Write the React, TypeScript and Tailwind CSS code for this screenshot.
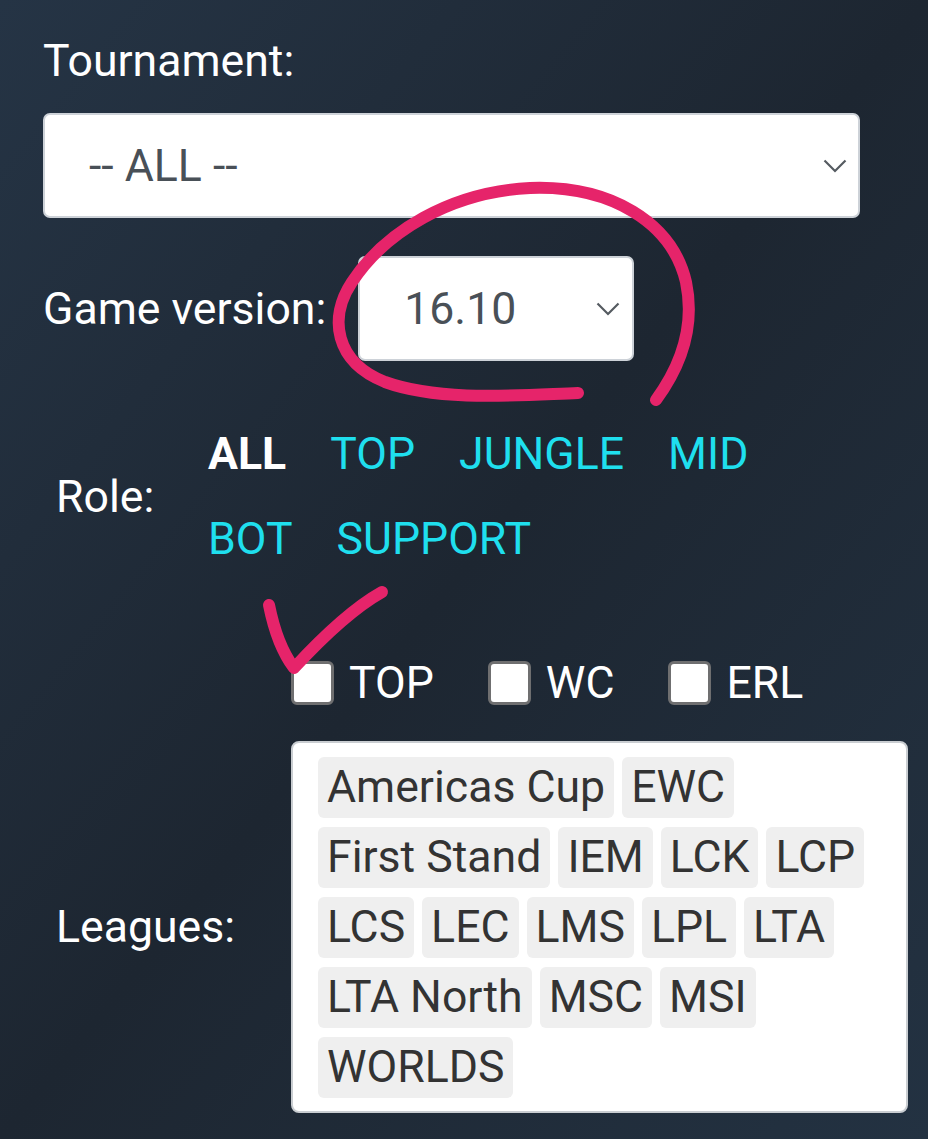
import { ReactNode } from "react";

const roles = ["ALL", "TOP", "JUNGLE", "MID", "BOT", "SUPPORT"];
const leagues = [
  "Americas Cup",
  "EWC",
  "First Stand",
  "IEM",
  "LCK",
  "LCP",
  "LCS",
  "LEC",
  "LMS",
  "LPL",
  "LTA",
  "LTA North",
  "MSC",
  "MSI",
  "WORLDS",
];

function Chevron() {
  return (
    <svg width="24" height="14" viewBox="0 0 24 14" fill="none" className="shrink-0">
      <path d="M1.5 1.5 L12 12 L22.5 1.5" stroke="#555b61" strokeWidth="2.2" />
    </svg>
  );
}

function FakeSelect({ value, className }: { value: string; className?: string }) {
  return (
    <div
      className={`flex h-[105px] shrink-0 items-center justify-between rounded-[7px] border-2 border-[#cdd2d8] bg-white pl-[44px] pr-[11px] text-[#495057] ${className ?? ""}`}
    >
      <span>{value}</span>
      <Chevron />
    </div>
  );
}

function Check({ label }: { label: string }) {
  return (
    <label className="flex items-center gap-[15px]">
      <span className="block h-[44px] w-[43px] rounded-[6px] border-[3px] border-[#6f6f70] bg-white" />
      <span>{label}</span>
    </label>
  );
}

function Cell({ children, className }: { children: ReactNode; className?: string }) {
  return <div className={`flex shrink-0 items-center ${className ?? ""}`}>{children}</div>;
}

export default function App() {
  return (
    <div className="relative min-h-[1139px] w-full overflow-hidden bg-linear-to-br from-[#253445] via-[#1d2631] to-[#233242] font-['Roboto',sans-serif] text-[44.6px] leading-[66px] text-white">
      <div className="pl-[43px] pt-[28px]">
        <div className="h-[66px]">Tournament:</div>
        <FakeSelect value="-- ALL --" className="mt-[19px] w-[817px]" />

        <div className="mt-[38px] flex items-center gap-[32px]">
          <span>Game version:</span>
          <FakeSelect value="16.10" className="w-[276px] pl-[44px] pr-[12px]" />
        </div>

        {/* role filter */}
        <div className="mt-[51px] flex items-center">
          <Cell className="w-[165px] pl-[13px]">Role:</Cell>
          <div className="flex w-[570px] flex-wrap gap-x-[44px] leading-[85px]">
            {roles.map((r) =>
              r === "ALL" ? (
                <span key={r} className="font-bold text-white">
                  {r}
                </span>
              ) : (
                <a key={r} href="#" className="text-[#1fdfee]">
                  {r}
                </a>
              )
            )}
          </div>
        </div>

        <div className="mt-[66px] flex h-[70px] items-center pl-[248px]">
          <div className="flex items-center gap-[54px]">
            <Check label="TOP" />
            <Check label="WC" />
            <Check label="ERL" />
          </div>
        </div>

        <div className="mt-[23px] flex items-center">
          <Cell className="w-[248px] pl-[13px]">Leagues:</Cell>
          <div className="flex h-[372px] w-[617px] shrink-0 flex-wrap content-start gap-x-[8px] gap-y-[9px] rounded-[8px] border-2 border-[#c9cdd1] bg-white pb-[14px] pl-[25px] pr-[28px] pt-[14px]">
            {leagues.map((l) => (
              <span
                key={l}
                className="flex h-[61px] items-center rounded-[6px] bg-[#efefef] px-[9px] text-[44.6px] leading-none text-[#333333]"
              >
                {l}
              </span>
            ))}
          </div>
        </div>
      </div>

      {/* hand-drawn annotations */}
      <svg
        className="pointer-events-none absolute inset-0"
        width="928"
        height="1139"
        viewBox="0 0 928 1139"
        fill="none"
      >
        <path
          d="M578 393 C 520 395, 440 402, 385 382 C 335 362, 328 318, 352 282 C 385 232, 450 192, 530 188 C 610 185, 672 222, 686 282 C 696 330, 678 370, 656 400"
          stroke="#e6246a"
          strokeWidth="12"
          strokeLinecap="round"
          strokeLinejoin="round"
        />
        <path
          d="M269 605 C 274 630, 282 652, 294 668 C 318 642, 350 610, 382 592"
          stroke="#e6246a"
          strokeWidth="12"
          strokeLinecap="round"
          strokeLinejoin="round"
        />
      </svg>
    </div>
  );
}
